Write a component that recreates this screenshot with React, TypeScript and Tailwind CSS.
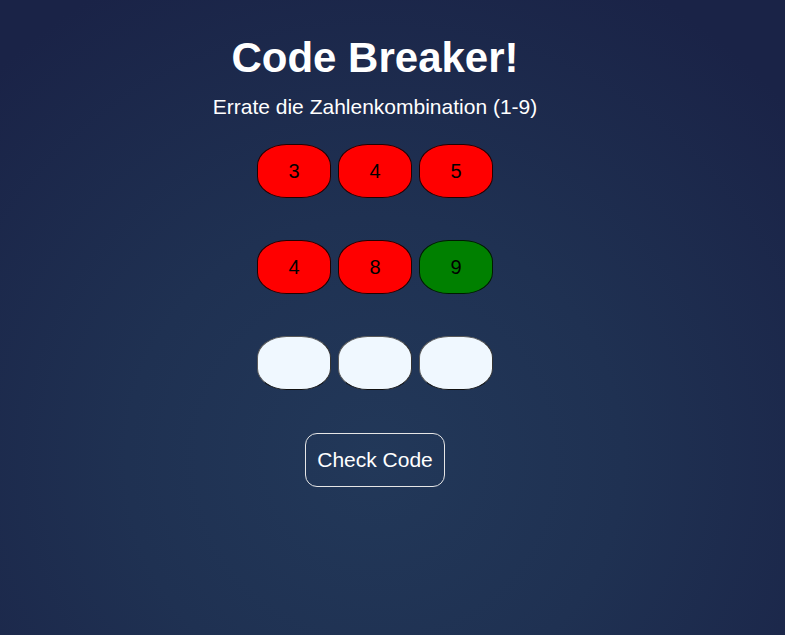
const rows: { value: string; color: "red" | "green" | "empty" }[][] = [
  [
    { value: "3", color: "red" },
    { value: "4", color: "red" },
    { value: "5", color: "red" },
  ],
  [
    { value: "4", color: "red" },
    { value: "8", color: "red" },
    { value: "9", color: "green" },
  ],
  [
    { value: "", color: "empty" },
    { value: "", color: "empty" },
    { value: "", color: "empty" },
  ],
];

function Pill({ value, color }: { value: string; color: "red" | "green" | "empty" }) {
  const tone =
    color === "red"
      ? "bg-[#ff0000] border border-[#220000]"
      : color === "green"
        ? "bg-[#008000] border border-[#001a00]"
        : "bg-[#f0f8ff] border-[1.5px] border-t-[#5a5a5a] border-l-[#5a5a5a] border-b-[#111111] border-r-[#333333]";
  return (
    <div
      className={`w-[74px] h-[54px] rounded-[40%] flex items-center justify-center text-[20px] text-black ${tone}`}
    >
      {value}
    </div>
  );
}

export default function App() {
  return (
    <div
      className="min-h-screen w-full bg-[radial-gradient(ellipse_70%_85%_at_375px_460px,#223859_0%,#1f3152_45%,#1a2347_100%)]"
      style={{ fontFamily: '"Liberation Sans", Arial, sans-serif' }}
    >
      <div className="w-[750px] flex flex-col items-center text-white">
        <h1 className="mt-[34px] text-[42px] leading-[48px] font-bold">Code Breaker!</h1>
        <p className="mt-[13px] text-[21px] leading-[24px]">Errate die Zahlenkombination (1-9)</p>

        <div className="mt-[25px] flex flex-col gap-[42px]">
          {rows.map((row, i) => (
            <div key={i} className="flex gap-[7px]">
              {row.map((p, j) => (
                <Pill key={j} value={p.value} color={p.color} />
              ))}
            </div>
          ))}
        </div>

        <button className="mt-[43px] h-[54px] px-[11px] rounded-[12px] border border-[#e6e6e6] bg-transparent text-[21px] text-white">
          Check Code
        </button>
      </div>
    </div>
  );
}
